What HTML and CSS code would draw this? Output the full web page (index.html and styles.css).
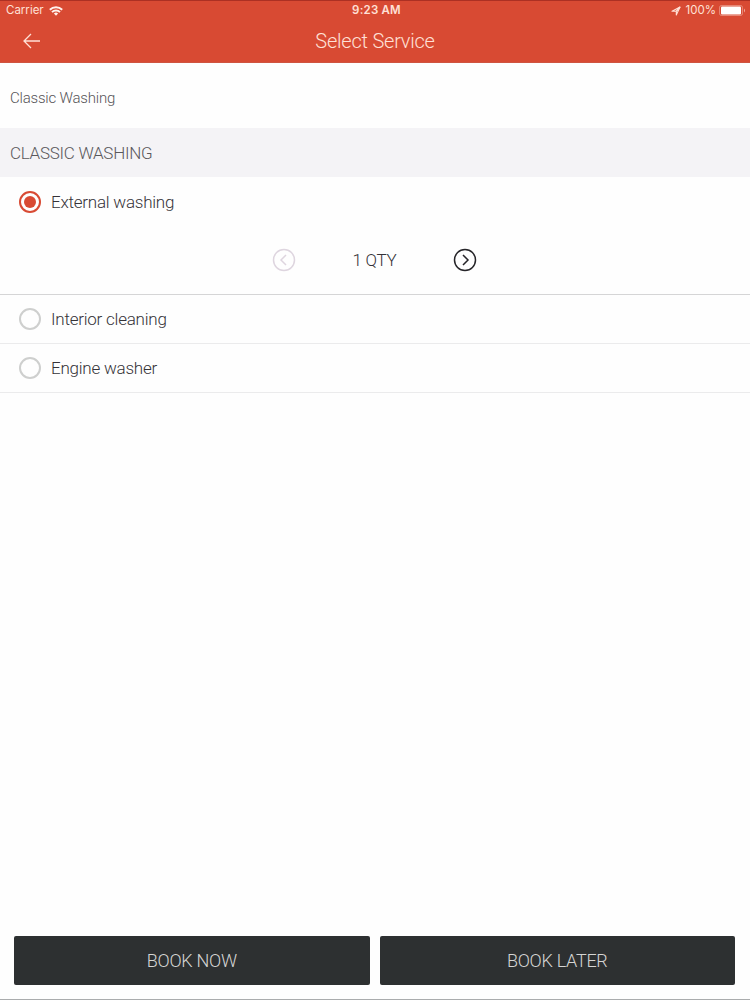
FILE: index.html
```html
<!DOCTYPE html>
<html lang="en">
<head>
<meta charset="utf-8">
<title>Select Service</title>
<link rel="stylesheet" href="styles.css">
</head>
<body>
<div class="app">
  <header class="header">
    <div class="status">
      <div class="status-side">
        <span>Carrier</span>
        <svg class="wifi" width="14" height="10" viewBox="0 0 14 10" fill="none" stroke="currentColor" stroke-width="2"><path d="M.8 3.8a9 9 0 0 1 12.4 0M3 6.1a5.8 5.8 0 0 1 8 0"/><path d="M7 9.7 4.9 7.6a3 3 0 0 1 4.2 0z" fill="currentColor" stroke="none"/></svg>
      </div>
      <strong class="time">9:23 AM</strong>
      <div class="status-side status-right">
        <svg class="location" width="10" height="10" viewBox="0 0 10 10" fill="none" stroke="currentColor" stroke-width="1.1" stroke-linejoin="round"><path d="M9 1 5.3 9V5.2H1z"/><path d="M9 1 5.3 5.2" stroke-width="1.7"/></svg>
        <span>100%</span>
        <svg class="battery" width="27" height="11" viewBox="0 0 27 11"><rect x=".5" y=".5" width="23" height="10" rx="2" fill="none" stroke="currentColor" opacity=".4"/><rect x="2" y="1.5" width="20" height="8" rx="1" fill="#fff"/><path d="M25 3.5q2 2 0 4z" fill="currentColor" opacity=".65"/></svg>
      </div>
    </div>
    <nav class="navbar">
      <svg class="back" width="18" height="16" viewBox="0 0 18 16" fill="none" stroke="currentColor" stroke-width="1.3"><path d="M17 8H1.5M8 1 1 8l7 7"/></svg>
      <h1 class="title">Select Service</h1>
    </nav>
  </header>
  <main class="content">
    <p class="summary">Classic Washing</p>
    <h2 class="section">CLASSIC WASHING</h2>
    <section class="selected">
      <div class="option"><span class="radio radio-on"></span><span>External washing</span></div>
      <div class="quantity">
        <svg class="step step-off" width="24" height="24" viewBox="0 0 24 24" fill="none" stroke="currentColor" stroke-width="1.5"><circle cx="12" cy="12" r="10.5"/><path d="m14 7-5 5 5 5"/></svg>
        <span class="amount">1 QTY</span>
        <svg class="step" width="24" height="24" viewBox="0 0 24 24" fill="none" stroke="currentColor" stroke-width="1.5"><circle cx="12" cy="12" r="10.5"/><path d="m10 7 5 5-5 5"/></svg>
      </div>
    </section>
    <div class="option row"><span class="radio"></span><span>Interior cleaning</span></div>
    <div class="option row"><span class="radio"></span><span>Engine washer</span></div>
  </main>
  <footer class="footer">
    <button class="book">BOOK NOW</button>
    <button class="book">BOOK LATER</button>
  </footer>
</div>
</body>
</html>
```
FILE: styles.css
```css
* { box-sizing: border-box; }
body { margin: 0; background: #fefefe; font-family: Roboto, sans-serif; font-weight: 300; color: #353338; }
svg { display: block; flex: none; }
.app { height: 1000px; display: flex; flex-direction: column; border-bottom: 1px solid #aaacad; }
.header { height: 63px; background: #d84a33; border-top: 1px solid #ac3023; border-bottom: 1px solid #cf5440; color: #ffe0d6; }
.status { height: 19px; display: grid; grid-template-columns: 1fr auto 1fr; align-items: center; padding: 0 4px 0 6px; font: 400 11.5px/19px Inter, sans-serif; }
.status-side { display: flex; align-items: center; gap: 5px; }
.status-right { justify-content: flex-end; gap: 3px; }
.location { margin-right: 2px; }
.wifi { color: #fff2ed; }
.time { padding-left: 1px; font-size: 11.5px; font-weight: 600; letter-spacing: .2px; }
.navbar { height: 42px; display: grid; grid-template-columns: 40px 1fr 40px; align-items: center; }
.back { margin-left: 23px; }
.title { margin: 0; text-align: center; font-size: 20px; line-height: 24px; font-weight: 300; letter-spacing: -.22px; }
.content { flex: 1; }
.summary { height: 65px; margin: 0; padding: 5px 10px 0; display: flex; align-items: center; font-size: 15px; letter-spacing: -.2px; color: #565458; }
.section { height: 49px; margin: 0; padding: 1px 10px 0; display: flex; align-items: center; background: #f4f3f6; font-size: 17px; font-weight: 300; letter-spacing: -.28px; color: #5a585c; }
.selected { height: 118px; border-bottom: 1px solid #d5d5d6; }
.option { height: 49px; padding-left: 19px; display: flex; align-items: center; gap: 10px; font-size: 17px; letter-spacing: -.23px; }
.row { border-bottom: 1px solid #ebebec; }
.radio { width: 22px; height: 22px; flex: none; border: 2px solid #cecfce; border-radius: 50%; display: grid; place-items: center; }
.radio-on { border-color: #d84a33; }
.radio-on::after { content: ""; width: 12px; height: 12px; background: #d84a33; border-radius: 50%; }
.quantity { height: 68px; padding-right: 1px; display: grid; grid-template-columns: 24px 157px 24px; justify-content: center; align-items: center; text-align: center; font-size: 17px; letter-spacing: -.2px; }
.step { color: #252428; }
.step-off { color: #ded5df; }
.footer { height: 63px; display: grid; grid-template-columns: 1fr 1fr; gap: 10px; padding: 0 15px 14px 14px; }
.book { padding: 0; border: 0; border-radius: 2px; background: #2d3031; color: #d5d5d4; font: 300 18px/24px Roboto, sans-serif; letter-spacing: -.28px; }
```
